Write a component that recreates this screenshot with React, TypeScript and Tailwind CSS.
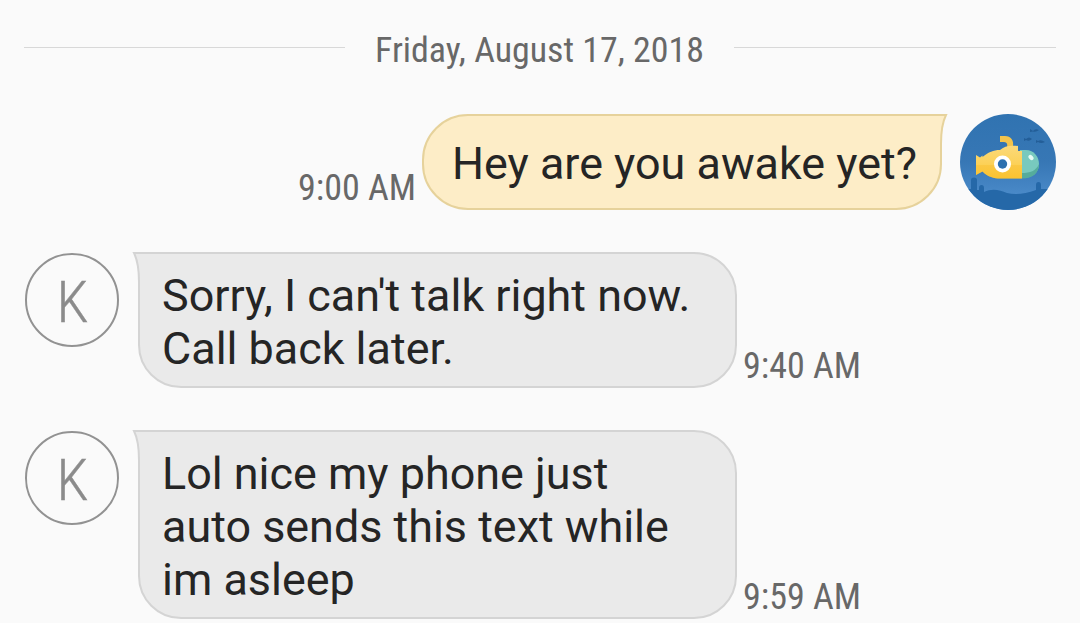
import React from 'react';

type Message = {
  id: number;
  lines: string[];
  time: string;
  sent?: boolean;
};

const messages: Message[] = [
  { id: 1, lines: ['Hey are you awake yet?'], time: '9:00 AM', sent: true },
  { id: 2, lines: ["Sorry, I can't talk right now.", 'Call back later.'], time: '9:40 AM' },
  { id: 3, lines: ['Lol nice my phone just', 'auto sends this text while', 'im asleep'], time: '9:59 AM' },
];

const SubmarineAvatar = () => (
  <svg viewBox="0 0 96 96" className="w-24 h-24 shrink-0">
    <defs>
      <clipPath id="disc">
        <circle cx="48" cy="48" r="48" />
      </clipPath>
      <linearGradient id="sea" x1="0" y1="0" x2="0" y2="1">
        <stop offset="0" stopColor="#3073b1" />
        <stop offset="0.5" stopColor="#3777b5" />
        <stop offset="0.85" stopColor="#4a8ac9" />
      </linearGradient>
      <linearGradient id="hull" x1="0" y1="0" x2="0" y2="1">
        <stop offset="0" stopColor="#fbd97a" />
        <stop offset="0.5" stopColor="#fcd25c" />
        <stop offset="1" stopColor="#fbc634" />
      </linearGradient>
    </defs>
    <g clipPath="url(#disc)">
      <rect width="96" height="96" fill="url(#sea)" />
      {/* sea floor */}
      <path
        d="M0 75H11V66Q11 63.500 14 63.500T17 66V76H19V74Q19 71 21.500 71T24 74V78C32 74 40 76 47 79C55 81 65 80 76 76V71Q76 68 78.500 68T81 71V75H96V96H0Z"
        fill="#2568a8"
      />
      {/* fish */}
      <g fill="#235e98">
        <path d="M70 15L73 17Q75 14 79 16Q76 18.500 73 17.500L70 18Z" />
        <path d="M64 24L66 25Q69 22 72 25Q69 28 66 26L64 27Z" />
        <path d="M76 26L78 27Q81 25 85 28Q81 30 78 28L76 29Z" />
      </g>
      {/* glass nose */}
      <path d="M60 36H66C74 36 79 43 79 50C79 58 73 64 62 64H60Z" fill="#78c9be" />
      <path d="M62 59C70 59 76 57 79 50C79 59 73 64.500 62 64.500Z" fill="#55ac9c" />
      <ellipse cx="71" cy="43.500" rx="3" ry="2" transform="rotate(45 71 43.500)" fill="#e5faf5" />
      {/* periscope */}
      <path d="M40 22H45C51 22 54 26 53 33H47C48 29 46 28 43 28H40Z" fill="#f3c44c" />
      <path
        d="M16 41L20 43.500L22.500 41.500V43C29 38 33 36 40 36C44 32 50 31 58 32V37H62V64.500H40C34 64.500 28 63 22.500 57.500L16 61Z"
        fill="url(#hull)"
      />
      <path d="M16 51H62V64.500H40C34 64.500 28 63 22.500 57.500L16 61Z" fill="#f9bd2d" opacity="0.4" />
      <circle cx="42.500" cy="50" r="8.500" fill="#fff" />
      <circle cx="42.500" cy="50" r="4.700" fill="#2d70ae" />
    </g>
  </svg>
);

const LetterAvatar = ({ letter }: { letter: string }) => (
  <div className="mt-px flex h-[94px] w-[94px] shrink-0 items-center justify-center rounded-full border-2 border-[#929292]">
    <span className="pt-1 pl-px font-['Roboto_Condensed',Roboto,sans-serif] text-[58px] leading-none font-light text-[#8b8b8b] [-webkit-text-stroke:0.4px_#8b8b8b]">
      {letter}
    </span>
  </div>
);

// Small pointed corner that sits over the top edge of a bubble
const Tail = ({ sent }: { sent?: boolean }) => (
  <svg
    viewBox="0 0 16 30"
    className={`absolute -top-[2px] h-[30px] w-4 ${sent ? '-right-[8px] -scale-x-100' : '-left-[8px]'}`}
  >
    <path d="M2 1H16V30H7Q7 12 2 1Z" fill={sent ? '#fdedc7' : '#eaeaea'} />
    <path d="M16 1H2Q7 11 7 30" fill="none" stroke={sent ? '#e6d29b' : '#d4d4d4'} strokeWidth="2" />
  </svg>
);

const Bubble = ({ message }: { message: Message }) => (
  <div
    className={`relative border-2 text-[44.9px] leading-[53px] whitespace-nowrap text-[#252525] ${
      message.sent
        ? 'h-24 w-[520px] rounded-[46px] rounded-tr-none border-[#e6d29b] bg-[#fdedc7] pt-[21px] pl-[28px]'
        : 'w-[599px] rounded-[43px] rounded-tl-none border-[#d4d4d4] bg-[#eaeaea] pt-[15px] pb-[11px] pl-[22px]'
    }`}
  >
    <Tail sent={message.sent} />
    {message.lines.map(line => (
      <p key={line}>{line}</p>
    ))}
  </div>
);

const Time = ({ value }: { value: string }) => (
  <span className="block pb-px font-['Roboto_Condensed',Roboto,sans-serif] text-[36px] leading-[42px] whitespace-nowrap text-[#686868]">
    {value}
  </span>
);

export default function App() {
  return (
    <div className="h-[623px] w-[1080px] overflow-hidden bg-[#fafafa] px-6 pt-[26px] font-[Roboto,sans-serif]">
      <div className="flex h-12 items-center justify-between">
        <div className="mb-[5px] h-px w-[321px] bg-[#d8d8d8]" />
        <span className="font-['Roboto_Condensed',Roboto,sans-serif] text-[35.9px] leading-[48px] whitespace-nowrap text-[#686868]">
          Friday, August 17, 2018
        </span>
        <div className="mb-[5px] h-px w-[322px] bg-[#d8d8d8]" />
      </div>

      <div className="mt-10 flex flex-col gap-[42px]">
        {messages.map(message =>
          message.sent ? (
            <div key={message.id} className="flex items-end justify-end">
              <div className="mr-[6px]">
                <Time value={message.time} />
              </div>
              <Bubble message={message} />
              <div className="ml-[18px]">
                <SubmarineAvatar />
              </div>
            </div>
          ) : (
            <div key={message.id} className="flex items-start pl-px">
              <LetterAvatar letter="K" />
              <div className="ml-[19px]">
                <Bubble message={message} />
              </div>
              <div className="ml-[6px] self-end">
                <Time value={message.time} />
              </div>
            </div>
          )
        )}
      </div>
    </div>
  );
}
